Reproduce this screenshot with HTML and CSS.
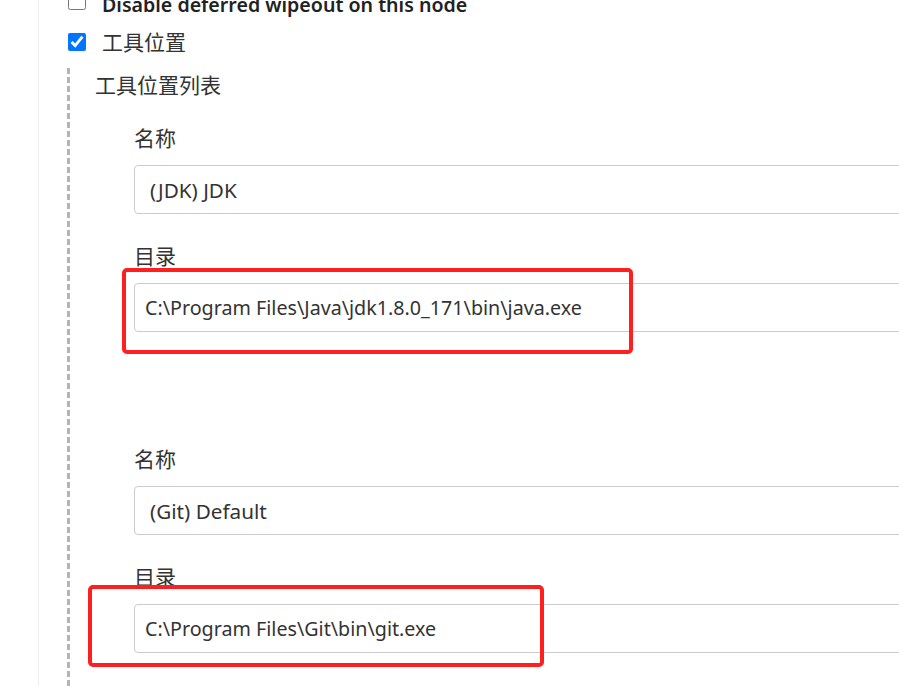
FILE: index.html
```html
<!DOCTYPE html>
<html lang="zh-CN">
<head>
  <meta charset="UTF-8" />
  <meta name="viewport" content="width=device-width, initial-scale=1.0" />
  <title>节点属性 - Jenkins</title>
  <link rel="stylesheet" href="styles.css">
</head>
<body>
  <main class="page">
    <!-- Node properties -->
    <div class="option option-cut">
      <input type="checkbox" />
      <span class="option-label option-label-strong">Disable deferred wipeout on this node</span>
    </div>
    <div class="option">
      <input type="checkbox" checked />
      <span class="option-label">工具位置</span>
    </div>

    <div class="nested">
      <div class="nested-title">工具位置列表</div>

      <div class="tool-list">
        <div class="tool">
          <div class="field-label">名称</div>
          <div class="field field-name">(JDK) JDK</div>
          <div class="field-label">目录</div>
          <div class="field">C:\Program Files\Java\jdk1.8.0_171\bin\java.exe</div>
        </div>

        <div class="tool">
          <div class="field-label">名称</div>
          <div class="field field-name">(Git) Default</div>
          <div class="field-label">目录</div>
          <div class="field">C:\Program Files\Git\bin\git.exe</div>
        </div>
      </div>
    </div>
  </main>

  <!-- red annotation boxes drawn over the screenshot -->
  <div class="mark mark-jdk"></div>
  <div class="mark mark-git"></div>
</body>
</html>
```

FILE: styles.css
```css
* {
  margin: 0;
  padding: 0;
  box-sizing: border-box;
}

body {
  font-family: "Noto Sans", "Noto Sans CJK SC", sans-serif;
  background-color: white;
  color: #333;
  overflow: hidden;
  position: relative;
  min-height: 100vh;
}

.page {
  margin-left: 38px;
  border-left: 1px solid #ebedf0;
  padding-left: 29px;
  min-height: 100vh;
}

.option {
  display: flex;
  align-items: center;
  gap: 16px;
  height: 30px;
  margin-bottom: 11px;
}

.option-cut {
  margin-top: -14px;
}

.option input {
  width: 18px;
  height: 18px;
  margin: 0;
  flex-shrink: 0;
}

.option-label {
  font-size: 21px;
  line-height: 30px;
}

.option-label-strong {
  font-size: 19.6px;
  font-weight: 600;
  color: #222;
  padding-top: 7px;
}

.nested {
  margin-top: 10px;
  margin-left: -1px;
  padding: 2px 0 40px 28px;
  background-image: repeating-linear-gradient(to bottom, #b4b4b4 0 6px, transparent 6px 9px);
  background-size: 3px 100%;
  background-repeat: no-repeat;
}

.nested-title {
  font-size: 21px;
  line-height: 30px;
}

.tool-list {
  padding-left: 39px;
  padding-top: 23px;
}

.tool {
  display: flex;
  flex-direction: column;
}

.tool + .tool {
  margin-top: 112px;
}

.field-label {
  font-size: 21px;
  line-height: 30px;
  margin-bottom: 12px;
}

.field {
  width: 820px;
  height: 49px;
  border: 1px solid #ccc;
  border-radius: 4px;
  padding: 0 10px;
  display: flex;
  align-items: center;
  font-size: 19.7px;
  color: #333;
  white-space: nowrap;
}

.field + .field-label {
  margin-top: 27px;
}

.field-name {
  padding-left: 15px;
  font-size: 20.7px;
}

.mark {
  position: absolute;
  border: 4px solid #ff1f1f;
  border-radius: 5px;
}

.mark-jdk {
  left: 122px;
  top: 268px;
  width: 511px;
  height: 86px;
}

.mark-git {
  left: 88px;
  top: 585px;
  width: 456px;
  height: 82px;
}
```
